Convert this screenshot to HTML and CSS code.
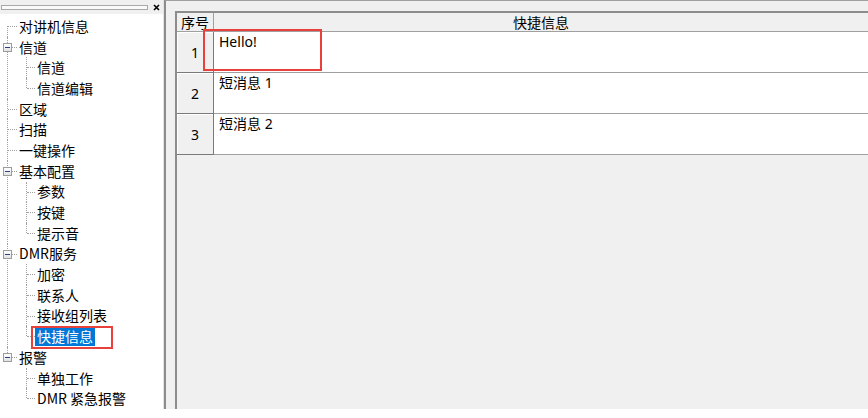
FILE: index.html
```html
<!DOCTYPE html>
<html lang="zh-CN">
  <head>
    <meta charset="UTF-8" />
    <title>快捷信息</title>
    <link rel="stylesheet" href="styles.css">
  </head>
  <body>
    <div class="app">
      <!-- Arborescence de gauche -->
      <div class="side">
        <div class="side-title">
          <div class="grip"></div>
          <svg class="close" width="7" height="7" viewBox="0 0 7 7">
            <path d="M1 1 L6 6 M6 1 L1 6" stroke="#000" stroke-width="1.6" fill="none" />
          </svg>
        </div>
        <ul class="tree">
          <li><div class="node"><span class="label">对讲机信息</span></div></li>
          <li>
            <div class="node"><span class="exp"></span><span class="label">信道</span></div>
            <ul class="sub">
              <li><div class="node"><span class="label">信道</span></div></li>
              <li><div class="node"><span class="label">信道编辑</span></div></li>
            </ul>
          </li>
          <li><div class="node"><span class="label">区域</span></div></li>
          <li><div class="node"><span class="label">扫描</span></div></li>
          <li><div class="node"><span class="label">一键操作</span></div></li>
          <li>
            <div class="node"><span class="exp"></span><span class="label">基本配置</span></div>
            <ul class="sub">
              <li><div class="node"><span class="label">参数</span></div></li>
              <li><div class="node"><span class="label">按键</span></div></li>
              <li><div class="node"><span class="label">提示音</span></div></li>
            </ul>
          </li>
          <li>
            <div class="node"><span class="exp"></span><span class="label">DMR服务</span></div>
            <ul class="sub">
              <li><div class="node"><span class="label">加密</span></div></li>
              <li><div class="node"><span class="label">联系人</span></div></li>
              <li><div class="node"><span class="label">接收组列表</span></div></li>
              <li><div class="node sel"><span class="label">快捷信息</span><span class="mark"></span></div></li>
            </ul>
          </li>
          <li>
            <div class="node"><span class="exp"></span><span class="label">报警</span></div>
            <ul class="sub">
              <li><div class="node"><span class="label">单独工作</span></div></li>
              <li><div class="node"><span class="label">DMR 紧急报警</span></div></li>
            </ul>
          </li>
        </ul>
      </div>

      <!-- Tableau des messages -->
      <div class="main">
        <div class="grid">
          <div class="hrow">
            <div class="corner">序号</div>
            <div class="hcell">快捷信息</div>
          </div>
          <div class="row">
            <div class="rhead">1</div>
            <div class="cell">Hello!</div>
            <span class="mark cell-mark"></span>
          </div>
          <div class="row">
            <div class="rhead">2</div>
            <div class="cell">短消息 1</div>
          </div>
          <div class="row">
            <div class="rhead">3</div>
            <div class="cell">短消息 2</div>
          </div>
        </div>
      </div>
    </div>
  </body>
</html>
```

FILE: styles.css
```css
body {
  margin: 0;
  background: #fff;
  font-family: 'Noto Sans CJK SC', sans-serif;
  font-size: 14px;
  color: #000;
}
.app {
  display: flex;
  height: 409px;
  overflow: hidden;
}

/* panneau gauche */
.side {
  width: 163px;
  background: #fff;
  border-right: 1px solid #e3e3e3;
  display: flex;
  flex-direction: column;
  overflow: hidden;
}
.side-title {
  flex-shrink: 0;
  height: 14px;
  background: #f0f0f0;
  display: flex;
  align-items: center;
  gap: 5px;
  padding-left: 1px;
}
.grip {
  width: 145px;
  height: 3px;
  border: 1px solid #a8a8a8;
  background: #fafafa;
}
.close {
  display: block;
}
.tree,
.sub {
  list-style: none;
  margin: 0;
  padding: 0;
}
.tree {
  flex-shrink: 0;
  padding-top: 2px;
}
.tree li {
  position: relative;
}
.tree > li::before,
.sub > li::before {
  content: '';
  position: absolute;
  top: 0;
  bottom: 0;
  border-left: 1px dotted #a0a0a0;
}
.tree > li::before {
  left: 7px;
}
.sub > li::before {
  left: 26px;
}
.tree > li:first-child::before {
  top: 10px;
}
.tree > li:last-child::before,
.sub > li:last-child::before {
  bottom: auto;
  height: 10px;
}
.node {
  position: relative;
  height: 20.7px;
  display: flex;
  align-items: center;
  padding-left: 17px;
  white-space: nowrap;
}
.sub .node {
  padding-left: 35px;
}
.node::before {
  content: '';
  position: absolute;
  left: 8px;
  width: 9px;
  top: 10px;
  border-top: 1px dotted #a0a0a0;
}
.sub .node::before {
  left: 27px;
  width: 8px;
}
.label {
  line-height: 19px;
  padding: 0 2px;
}
.sel .label {
  background: #0078d7;
  color: #fff;
}
.exp {
  position: absolute;
  left: 3px;
  top: 6px;
  width: 9px;
  height: 9px;
  box-sizing: border-box;
  border: 1px solid #9c9c9c;
  background: linear-gradient(#fff, #e2e2e2);
  z-index: 1;
}
.exp::after {
  content: '';
  position: absolute;
  left: 1px;
  top: 3px;
  width: 5px;
  height: 1px;
  background: #2a3f86;
}
.mark {
  position: absolute;
  left: 31px;
  top: 0;
  width: 82px;
  height: 23px;
  box-sizing: border-box;
  border: 2px solid #e8413c;
}

/* panneau droit */
.main {
  flex: 1;
  background: #f0f0f0;
  border-left: 2px solid #8c8c8c;
  border-top: 1px solid #a0a0a0;
  padding: 10px 0 0 9px;
}
.grid {
  height: 100%;
  border-left: 2px solid #8c8c8c;
  border-top: 2px solid #8c8c8c;
}
.hrow {
  display: flex;
  height: 18px;
  border-bottom: 1px solid #a0a0a0;
  line-height: 18px;
}
.corner {
  width: 36px;
  text-align: center;
  border-right: 1px solid #a0a0a0;
}
.hcell {
  flex: 1;
  text-align: center;
}
.row {
  position: relative;
  display: flex;
  height: 41px;
  box-sizing: border-box;
}
.rhead {
  width: 36px;
  background: #f0f0f0;
  border-right: 1px solid #7a7a7a;
  border-bottom: 1px solid #7a7a7a;
  box-shadow: inset 1px 1px #fff;
  display: flex;
  align-items: center;
  justify-content: center;
  font-family: 'Noto Sans', sans-serif;
}
.cell {
  flex: 1;
  background: #fff;
  border-bottom: 1px solid #a0a0a0;
  padding: 1px 5px 0;
  line-height: 18px;
  font-family: 'Noto Sans', 'Noto Sans CJK SC', sans-serif;
}
.cell-mark {
  left: 26px;
  top: -3px;
  width: 119px;
  height: 42px;
}
```
